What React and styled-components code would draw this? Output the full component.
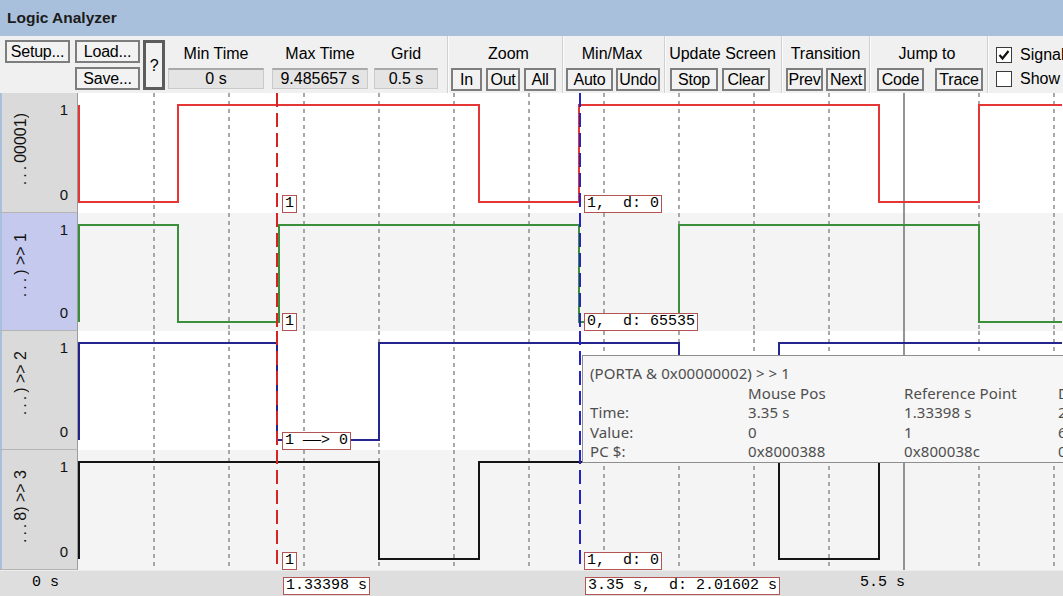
import React from "react";
import styled, { createGlobalStyle } from "styled-components";

const GlobalStyle = createGlobalStyle`
  html, body { margin: 0; padding: 0; }
  body {
    width: 1063px;
    height: 596px;
    overflow: hidden;
    background: #f0f0f0;
    font-family: "Liberation Sans", Arial, sans-serif;
  }
`;

const Window = styled.div`
  width: 1063px;
  height: 596px;
  display: flex;
  flex-direction: column;
  overflow: hidden;
`;

const TitleBar = styled.div`
  height: 36px;
  flex: none;
  display: flex;
  align-items: center;
  padding-left: 7px;
  background: #a9c0dc;
  color: #1b1b1b;
  font-weight: bold;
  font-size: 15.5px;
`;

const Toolbar = styled.div`
  height: 57px;
  flex: none;
  display: flex;
  overflow: hidden;
  background: #f0f0f0;
  font-size: 16px;
  color: #000;
`;

const FileButtons = styled.div`
  flex: none;
  display: grid;
  grid-template-columns: 65px 65px 22px;
  grid-template-rows: 23px 23px;
  column-gap: 5px;
  row-gap: 4px;
  padding: 4px 0 0 5px;

  & > :nth-child(3) { grid-column: 2; grid-row: 2; }
  & > :nth-child(4) { grid-column: 3; grid-row: 1 / span 2; margin-left: -2px; height: 50px; }
`;

const Button = styled.div`
  box-sizing: border-box;
  flex: none;
  width: ${(p) => p.$w || 65}px;
  height: 23px;
  border: 2px solid #7d7d7d;
  background: #f2f2f2;
  display: flex;
  align-items: center;
  justify-content: center;
  line-height: 19px;
  white-space: nowrap;
  letter-spacing: -0.2px;
`;

const HelpButton = styled(Button)`
  border: 3px solid #5c5c5c;
`;

const Field = styled.div`
  flex: none;
  width: ${(p) => p.$w}px;
  margin-left: ${(p) => p.$ml}px;
  display: flex;
  flex-direction: column;
  padding-top: 4px;
`;

const Caption = styled.div`
  height: 28px;
  line-height: 28px;
  text-align: center;
  white-space: nowrap;
  margin-left: ${(p) => p.$shift || 0}px;
`;

const ValueBox = styled.div`
  height: 21px;
  box-sizing: border-box;
  background: #e4e4e4;
  border: 1px solid #cacaca;
  border-top: 2px solid #a9a9a9;
  text-align: center;
  line-height: 18px;
  white-space: nowrap;
`;

const Separator = styled.div`
  width: 2px;
  box-sizing: border-box;
  flex: none;
  margin-left: ${(p) => p.$ml || 0}px;
  background: #d0d0d0;
  border-right: 1px solid #fbfbfb;
`;

const Group = styled.div`
  flex: none;
  display: flex;
  flex-direction: column;
  padding: 4px 0 0 ${(p) => p.$pl}px;
  width: ${(p) => p.$w}px;
  box-sizing: border-box;
`;

const ButtonRow = styled.div`
  display: flex;
  gap: ${(p) => p.$gap}px;
`;

const Checks = styled.div`
  flex: none;
  display: flex;
  flex-direction: column;
  padding: 11px 0 0 7px;
  gap: 8px;
`;

const CheckRow = styled.label`
  display: flex;
  align-items: center;
  gap: 8px;
  height: 16px;
  white-space: nowrap;
`;

const CheckBox = styled.span`
  width: 16px;
  height: 16px;
  box-sizing: border-box;
  border: 1px solid #3a3a3a;
  background: #fff;
  display: flex;
  align-items: center;
  justify-content: center;
`;

const ChartBody = styled.div`
  position: relative;
  display: flex;
  flex-direction: column;
  flex: 1;
  overflow: hidden;
  background: #fff;
`;

const Row = styled.div`
  display: flex;
  height: ${(p) => p.$h}px;
  flex: none;
`;

const LabelCell = styled.div`
  width: 78px;
  flex: none;
  box-sizing: border-box;
  border-right: 1px solid #9c9c9c;
  border-bottom: 1px solid #b4b4b4;
  box-shadow: inset 2px 0 0 #a9c0dc;
  background: ${(p) => (p.$selected ? "#c6c9ee" : "#dadada")};
  display: flex;
  justify-content: space-between;
  font-size: 15px;
  color: #111;
`;

const SignalName = styled.div`
  padding: 20px 0 0 13px;
  font-size: 16px;

  span {
    display: block;
    writing-mode: vertical-rl;
    transform: rotate(180deg);
    white-space: nowrap;
    line-height: 16px;
  }

  b {
    font-weight: normal;
    letter-spacing: 3px;
    margin-right: 2px;
  }
`;

const Levels = styled.div`
  display: flex;
  flex-direction: column;
  justify-content: space-between;
  padding: 8px 9px 8px 0;
  line-height: 18px;
`;

const Plot = styled.div`
  position: relative;
  flex: 1;
  background: ${(p) => (p.$alt ? "#f4f4f4" : "#ffffff")};

  svg { display: block; }
`;

const Tag = styled.div`
  position: absolute;
  left: ${(p) => p.$x}px;
  bottom: ${(p) => (p.$top === undefined ? "0" : "auto")};
  top: ${(p) => (p.$top === undefined ? "auto" : `${p.$top}px`)};
  height: 18px;
  box-sizing: border-box;
  padding: 0 2px;
  background: #fff;
  border: 1px solid #b25454;
  font-family: "Liberation Mono", "Courier New", monospace;
  font-size: 15px;
  line-height: 16px;
  color: #000;
  white-space: pre;
`;

const LongDash = styled.span`
  display: inline-block;
  transform: scaleX(2);
  transform-origin: left center;
  margin-right: 9px;
`;

const Axis = styled.div`
  position: relative;
  flex: 1;
  background: #dedede;
  border-top: 1px solid #ececec;
  font-family: "Liberation Mono", "Courier New", monospace;
  font-size: 15px;
`;

const AxisText = styled.span`
  position: absolute;
  left: ${(p) => p.$x}px;
  top: 3px;
  white-space: pre;
  color: #000;
`;

const Tooltip = styled.div`
  position: absolute;
  left: 582px;
  top: 262px;
  width: 600px;
  height: 108px;
  box-sizing: border-box;
  padding: 8px 0 0 7px;
  background: #f6f6f6;
  border: 1px solid #8e8e8e;
  font-family: "Noto Sans", "Open Sans", sans-serif;
  font-size: 15px;
  letter-spacing: 0.1px;
  line-height: 19.5px;
  color: #4e4e4e;
  display: grid;
  grid-template-columns: 158px 156px 154px 120px;
  align-content: start;
  white-space: nowrap;

  .title { grid-column: 1 / span 4; }
`;

const X0 = 79;
const W = 984;
const GRID = [155, 230, 305, 380, 455, 530, 605, 680, 755, 830, 980, 1055];
const RED_X = 278;
const BLUE_X = 581;

const buildPath = (init, edges, hi, lo) => {
  let level = init;
  let d = `M80 ${level ? lo : hi} V${level ? hi : lo}`;
  edges.forEach((x) => {
    level = 1 - level;
    d += ` H${x} V${level ? hi : lo}`;
  });
  return d + " H1063";
};

const signals = [
  { h: 120, name: "00001)", color: "#e53535", init: 0, edges: [179, 480, 580, 880, 980], red: "1", blue: "1,  d: 0" },
  { h: 118, name: ") >> 1", color: "#3b8f3b", init: 1, edges: [179, 280, 580, 680, 980], red: "1", blue: "0,  d: 65535", selected: true, alt: true },
  { h: 119, name: ") >> 2", color: "#25258f", init: 1, edges: [278, 380, 680, 780], red: <>1 <LongDash>—</LongDash>&gt; 0</> },
  { h: 120, name: "8) >> 3", color: "#141414", init: 1, edges: [380, 480, 780, 880], red: "1", blue: "1,  d: 0", alt: true },
];

const Wave = ({ h, color, init, edges }) => (
  <svg width={W} height={h} viewBox={`${X0} 0 ${W} ${h}`}>
    {GRID.map((x) => (
      <line key={x} x1={x} x2={x} y1={0} y2={h} stroke="#8d8d8d" strokeWidth="1.5" strokeDasharray="4 4" />
    ))}
    <line x1={905} x2={905} y1={0} y2={h} stroke="#727272" strokeWidth="1.5" />
    <path d={buildPath(init, edges, 12, 109)} stroke={color} strokeWidth="2" fill="none" />
    <line x1={RED_X} x2={RED_X} y1={0} y2={h} stroke="#d92222" strokeWidth="2" strokeDasharray="14 6" />
    <line x1={BLUE_X} x2={BLUE_X} y1={0} y2={h} stroke="#2424c4" strokeWidth="2" strokeDasharray="14 6" />
  </svg>
);

const Check = () => (
  <svg width="12" height="12" viewBox="0 0 12 12">
    <path d="M1.5 6 L4.5 9.5 L10.5 2" stroke="#111" strokeWidth="2.2" fill="none" />
  </svg>
);

const App = () => {
  return (
    <Window>
      <GlobalStyle />
      <TitleBar>Logic Analyzer</TitleBar>
      <Toolbar>
        <FileButtons>
          <Button>Setup...</Button>
          <Button>Load...</Button>
          <Button>Save...</Button>
          <HelpButton $w={22}>?</HelpButton>
        </FileButtons>
        <Field $w={96} $ml={1}>
          <Caption>Min Time</Caption>
          <ValueBox>0 s</ValueBox>
        </Field>
        <Field $w={96} $ml={8}>
          <Caption>Max Time</Caption>
          <ValueBox>9.485657 s</ValueBox>
        </Field>
        <Field $w={64} $ml={6}>
          <Caption>Grid</Caption>
          <ValueBox>0.5 s</ValueBox>
        </Field>
        <Separator $ml={9} />
        <Group $w={113} $pl={2}>
          <Caption $shift={4}>Zoom</Caption>
          <ButtonRow $gap={4}>
            <Button $w={31}>In</Button>
            <Button $w={34}>Out</Button>
            <Button $w={32}>All</Button>
          </ButtonRow>
        </Group>
        <Separator />
        <Group $w={100} $pl={2}>
          <Caption $shift={-6}>Min/Max</Caption>
          <ButtonRow $gap={3}>
            <Button $w={47}>Auto</Button>
            <Button $w={44}>Undo</Button>
          </ButtonRow>
        </Group>
        <Separator />
        <Group $w={115} $pl={4}>
          <Caption $shift={-6}>Update Screen</Caption>
          <ButtonRow $gap={4}>
            <Button $w={48}>Stop</Button>
            <Button $w={48}>Clear</Button>
          </ButtonRow>
        </Group>
        <Separator />
        <Group $w={86} $pl={3}>
          <Caption $shift={-4}>Transition</Caption>
          <ButtonRow $gap={3}>
            <Button $w={37}>Prev</Button>
            <Button $w={40}>Next</Button>
          </ButtonRow>
        </Group>
        <Separator />
        <Group $w={116} $pl={6}>
          <Caption $shift={-10}>Jump to</Caption>
          <ButtonRow $gap={11}>
            <Button $w={47}>Code</Button>
            <Button $w={48}>Trace</Button>
          </ButtonRow>
        </Group>
        <Separator />
        <Checks>
          <CheckRow>
            <CheckBox><Check /></CheckBox>
            Signal Info
          </CheckRow>
          <CheckRow>
            <CheckBox />
            Show Cycles
          </CheckRow>
        </Checks>
      </Toolbar>

      <ChartBody>
        {signals.map((s, i) => (
          <Row key={i} $h={s.h}>
            <LabelCell $selected={s.selected}>
              <SignalName>
                <span><b>...</b>{s.name}</span>
              </SignalName>
              <Levels>
                <span>1</span>
                <span>0</span>
              </Levels>
            </LabelCell>
            <Plot $alt={s.alt}>
              <Wave h={s.h} color={s.color} init={s.init} edges={s.edges} />
              <Tag $x={283 - X0}>{s.red}</Tag>
              {s.blue && <Tag $x={585 - X0}>{s.blue}</Tag>}
            </Plot>
          </Row>
        ))}
        <Axis>
          <AxisText $x={32}>0 s</AxisText>
          <AxisText $x={860}>5.5 s</AxisText>
          <Tag $x={283} $top={6}>1.33398 s</Tag>
          <Tag $x={585} $top={6}>3.35 s,  d: 2.01602 s</Tag>
        </Axis>
        <Tooltip>
          <div className="title">(PORTA &amp; 0x00000002) &gt; &gt; 1</div>
          <div />
          <div>Mouse Pos</div>
          <div>Reference Point</div>
          <div>Delta</div>
          <div>Time:</div>
          <div>3.35 s</div>
          <div>1.33398 s</div>
          <div>2.01602 s</div>
          <div>Value:</div>
          <div>0</div>
          <div>1</div>
          <div>65535</div>
          <div>PC $:</div>
          <div>0x8000388</div>
          <div>0x800038c</div>
          <div>0x4</div>
        </Tooltip>
      </ChartBody>
    </Window>
  );
};

export default App;
